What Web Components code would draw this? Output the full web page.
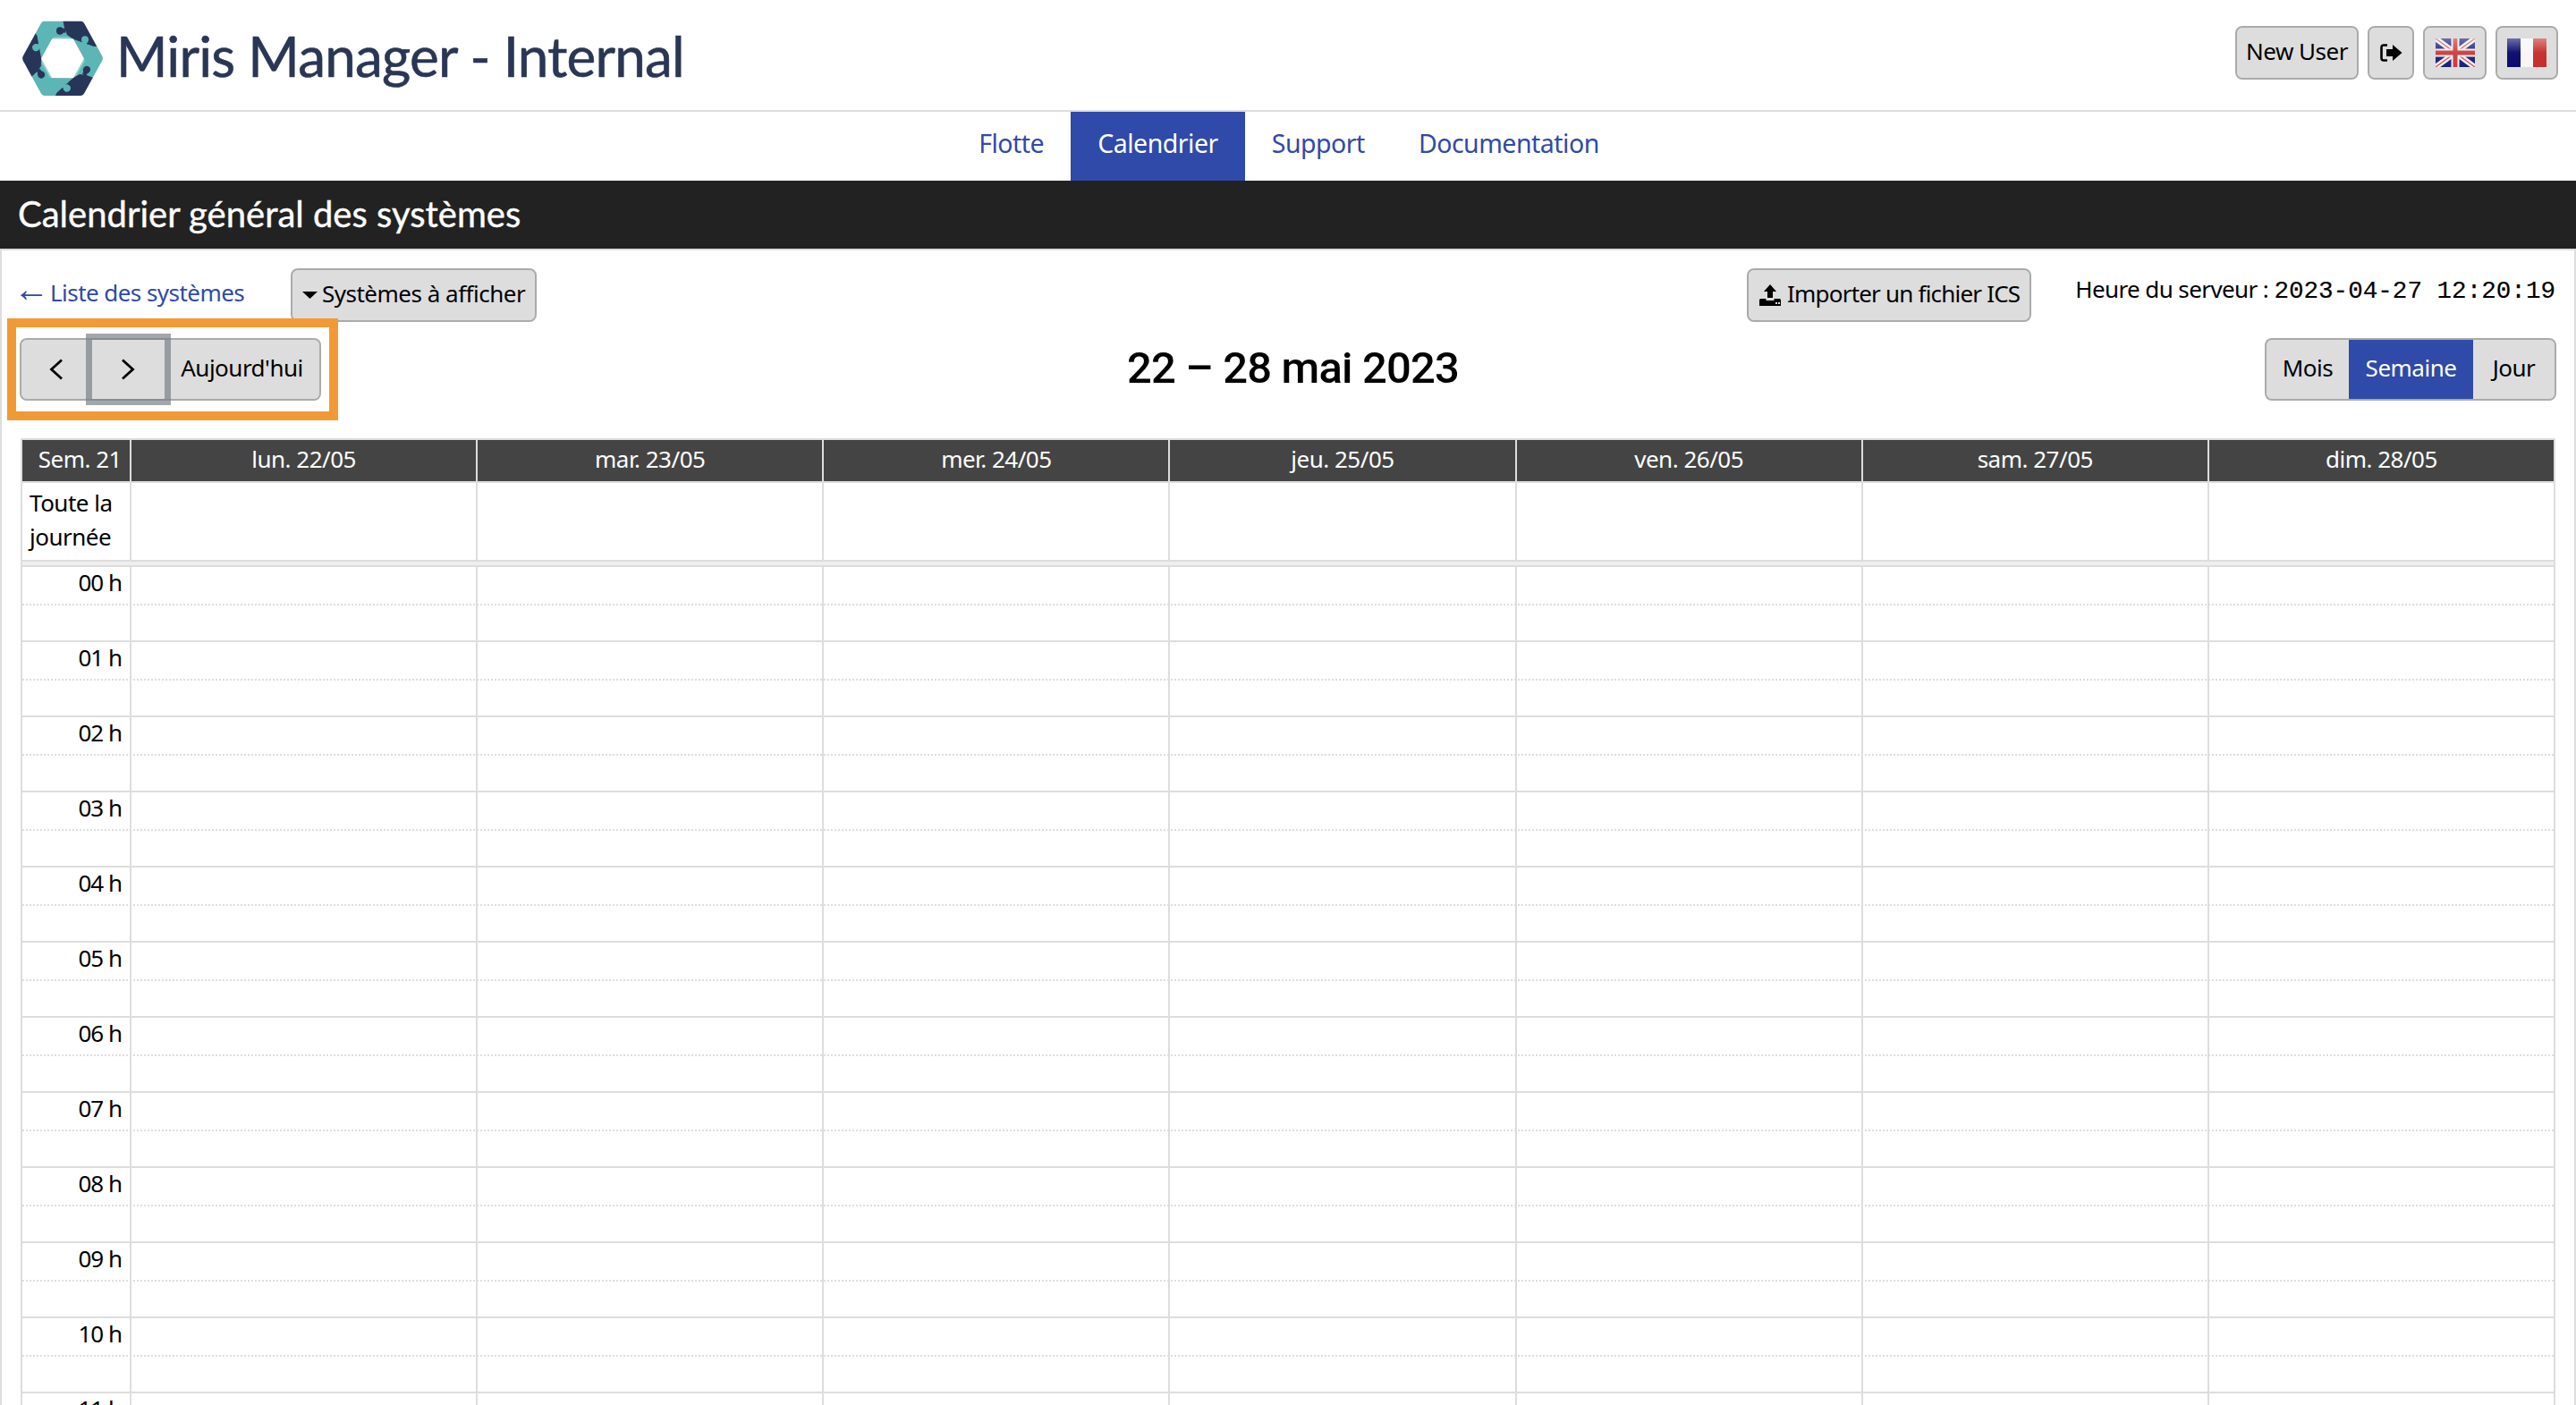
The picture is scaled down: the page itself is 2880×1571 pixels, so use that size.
<!DOCTYPE html>
<html lang="fr">
<head>
<meta charset="utf-8">
<title>Miris Manager - Calendrier</title>
<style>
    html, body { margin: 0; height: 1571px; overflow: hidden; background: #fff; }
    body { font-family: "Noto Sans", sans-serif; font-size: 26px; color: #000; }
</style>
</head>
<body>
<miris-header title-text="Miris Manager - Internal">
    <m-btn slot="actions" h="60" w="138">New User</m-btn>
    <m-btn slot="actions" h="60" icon="logout" w="52"></m-btn>
    <m-btn slot="actions" h="60" icon="uk" w="71"></m-btn>
    <m-btn slot="actions" h="60" icon="fr" w="70"></m-btn>
</miris-header>
<main-nav>
    <nav-tab>Flotte</nav-tab>
    <nav-tab active>Calendrier</nav-tab>
    <nav-tab>Support</nav-tab>
    <nav-tab>Documentation</nav-tab>
</main-nav>
<page-title>Calendrier général des systèmes</page-title>
<calendar-page></calendar-page>

<script>
const ICONS = {
    logout: `<svg width="25" height="20" viewBox="0 0 25 20"><path d="M8 1.5H4Q1.5 1.5 1.5 4V16Q1.5 18.5 4 18.5H8" fill="none" stroke="#000" stroke-width="2.6"/><path d="M7 6H14V1L24.5 10L14 19V14H7Z"/></svg>`,
    upload: `<svg width="26" height="24" viewBox="0 0 26 24" style="margin-right:6px"><path d="M13 0L20 8H16V15H10V8H6Z"/><path d="M1 17.5Q1 16 2.500 16H8.500V18H17.500V16H23.500Q25 16 25 17.500V24H1Z"/><rect x="19" y="20" width="2" height="2" fill="#ddd"/><rect x="22" y="20" width="2" height="2" fill="#ddd"/></svg>`,
    caret: `<svg width="17" height="8" viewBox="0 0 17 8" style="margin-right:5px"><path d="M0 0H17L8.500 8Z"/></svg>`,
    prev: `<svg width="16" height="24" viewBox="0 0 16 24" style="margin-right:2px"><path d="M14 1.500L2.500 12L14 22.500" fill="none" stroke="#000" stroke-width="2.800"/></svg>`,
    next: `<svg width="16" height="24" viewBox="0 0 16 24" style="margin-right:2px"><path d="M2 1.500L13.500 12L2 22.500" fill="none" stroke="#000" stroke-width="2.800"/></svg>`,
    uk: `<svg width="44" height="32" viewBox="0 0 44 32"><defs><filter id="b"><feGaussianBlur stdDeviation=".7"/></filter><linearGradient id="g" x1="0" y1="0" x2="0" y2="1"><stop offset="0" stop-color="#fff" stop-opacity=".35"/><stop offset=".5" stop-color="#fff" stop-opacity=".05"/><stop offset="1" stop-color="#fff" stop-opacity="0"/></linearGradient></defs><g filter="url(#b)"><rect width="44" height="32" fill="#1c2478"/><path d="M0 0L44 32M44 0L0 32" stroke="#eee" stroke-width="6"/><path d="M0 0L44 32M44 0L0 32" stroke="#cf5a60" stroke-width="1.500"/><path d="M22 0V32M0 16H44" stroke="#eee" stroke-width="9"/><path d="M22 0V32M0 16H44" stroke="#cc3a3a" stroke-width="5"/></g><rect width="44" height="32" fill="url(#g)"/></svg>`,
    fr: `<svg width="44" height="32" viewBox="0 0 44 32"><defs><linearGradient id="g2" x1="0" y1="0" x2="0" y2="1"><stop offset="0" stop-color="#fff" stop-opacity=".4"/><stop offset=".5" stop-color="#fff" stop-opacity=".02"/><stop offset="1" stop-color="#fff" stop-opacity="0"/></linearGradient></defs><rect width="15" height="32" fill="#0c0c70"/><rect x="15" width="14" height="32" fill="#f6f6f6"/><rect x="29" width="15" height="32" fill="#c62f2f"/><rect width="44" height="32" fill="url(#g2)"/></svg>`
};

// pinwheel logo: one dark piece repeated three times around the centre
const LOGO_PIECE = `
    <path fill="#273558" d="M2 -135H100L150 -40L105 -38L36 -62L15 -75L6 -98L2 -117Z"/>
    <circle fill="#273558" cx="-9" cy="-88" r="12"/>
    <rect fill="#273558" x="-6" y="-96" width="16" height="14"/>
    <circle fill="#5cb6b6" cx="75" cy="-60" r="12"/>
    <rect fill="#5cb6b6" x="69" y="-56" width="12" height="14" transform="rotate(18 75 -50)"/>
    <path fill="#8fd0cc" d="M-36 -62H36L20 -68H-30Z"/>
    <path fill="#3c4a80" d="M36 -62L72 0L64 -4L34 -56Z"/>`;

class MirisLogo extends HTMLElement {
    constructor() {
        super();
        this.attachShadow({ mode: 'open' });
    }
    connectedCallback() {
        const hex = r => [0, 60, 120, 180, 240, 300].map(a => {
            const t = a * Math.PI / 180;
            return (r * Math.cos(t)).toFixed(1) + ',' + (r * Math.sin(t)).toFixed(1);
        }).join(' ');
        this.shadowRoot.innerHTML = `
            <style>:host { display: block; width: 130px; height: 120px; flex: none; } svg { display: block; }</style>
            <svg width="130" height="120" viewBox="0 0 390 360">
                <defs><mask id="ring" maskUnits="userSpaceOnUse" x="-210" y="-190" width="420" height="380">
                    <polygon points="${hex(122)}" fill="#fff" stroke="#fff" stroke-width="26" stroke-linejoin="round"/>
                    <polygon points="${hex(72)}" fill="#000"/>
                </mask></defs>
                <g transform="translate(210 190) scale(1 1.05)">
                    <g mask="url(#ring)">
                        <rect x="-210" y="-190" width="420" height="380" fill="#5cb6b6"/>
                        <g>${LOGO_PIECE}</g>
                        <g transform="rotate(120)">${LOGO_PIECE}</g>
                        <g transform="rotate(240)">${LOGO_PIECE}</g>
                    </g>
                </g>
            </svg>`;
    }
}
customElements.define('miris-logo', MirisLogo);

class MirisHeader extends HTMLElement {
    constructor() {
        super();
        this.attachShadow({ mode: 'open' });
    }
    connectedCallback() {
        this.shadowRoot.innerHTML = `
            <style>
                :host { display: flex; align-items: center; box-sizing: border-box; height: 125px; border-bottom: 2px solid #ddd; background: #fff; }
                h1 { margin: 0; font: 400 62px/1 Lato, sans-serif; color: #2a3655; letter-spacing: -.8px; -webkit-text-stroke: .6px #2a3655; }
                .actions { margin-left: auto; margin-right: 20px; margin-top: -6px; display: flex; align-items: center; gap: 10px; }
            </style>
            <miris-logo></miris-logo>
            <h1>${this.getAttribute('title-text')}</h1>
            <div class="actions"><slot name="actions"></slot></div>`;
    }
}
customElements.define('miris-header', MirisHeader);

class MainNav extends HTMLElement {
    constructor() {
        super();
        this.attachShadow({ mode: 'open' });
        this.shadowRoot.innerHTML = `
            <style>:host { display: flex; justify-content: center; height: 77px; padding-left: 2px; background: #fff; }</style>
            <slot></slot>`;
    }
}
customElements.define('main-nav', MainNav);

class NavTab extends HTMLElement {
    constructor() {
        super();
        this.attachShadow({ mode: 'open' });
        this.shadowRoot.innerHTML = `
            <style>
                :host { display: flex; align-items: center; padding: 0 30px 7px; color: #2f4aa8; font-size: 28.500px; letter-spacing: -.5px; }
                :host([active]) { background: #2f4aa8; color: #fff; }
            </style>
            <slot></slot>`;
    }
}
customElements.define('nav-tab', NavTab);

class PageTitle extends HTMLElement {
    constructor() {
        super();
        this.attachShadow({ mode: 'open' });
        this.shadowRoot.innerHTML = `
            <style>
                :host { display: flex; align-items: center; box-sizing: border-box; height: 78px; padding: 0 20px 2px; background: #222; border-bottom: 2px solid #ddd; color: #fff; font: 400 40px/1 Lato, sans-serif; -webkit-text-stroke: .4px #fff; }
            </style>
            <slot></slot>`;
    }
}
customElements.define('page-title', PageTitle);

class MBtn extends HTMLElement {
    constructor() {
        super();
        this.attachShadow({ mode: 'open' });
    }
    connectedCallback() {
        const icon = this.getAttribute('icon');
        const h = this.getAttribute('h') || 60;
        const w = this.getAttribute('w');
        this.shadowRoot.innerHTML = `
            <style>
                :host { display: inline-flex; align-items: center; justify-content: center; box-sizing: border-box; height: ${h}px; ${w ? `width: ${w}px;` : 'padding: 0 11px;'} background: #ddd; background-clip: padding-box; border: 2px solid #aaa; border-radius: 8px; color: #000; font-size: 26px; letter-spacing: -.5px; white-space: nowrap; }
                :host([pos=first]) { border-radius: 8px 0 0 8px; border-right: 0; }
                :host([pos=mid]) { border-radius: 0; border-left: 0; border-right: 0; }
                :host([pos=last]) { border-radius: 0 8px 8px 0; border-left: 0; }
                :host([active]) { background: #2f4aa8; background-clip: padding-box; color: #fff; }
                :host([focused]) { position: relative; z-index: 1; }
                .label { display: block; margin-top: ${h == 70 ? -5 : -3}px; }
                .ring { position: absolute; inset: -7px; border: 7px solid rgba(118, 126, 134, .68); pointer-events: none; }
                svg { display: block; flex: none; }
            </style>
            ${icon ? ICONS[icon] : ''}<span class="label"><slot></slot></span>${this.hasAttribute('focused') ? '<span class="ring"></span>' : ''}`;
    }
}
customElements.define('m-btn', MBtn);

class BtnGroup extends HTMLElement {
    constructor() {
        super();
        this.attachShadow({ mode: 'open' });
        this.shadowRoot.innerHTML = `
            <style>:host { display: inline-flex; flex: none; }</style>
            <slot></slot>`;
    }
}
customElements.define('btn-group', BtnGroup);

class CalGrid extends HTMLElement {
    constructor() {
        super();
        this.attachShadow({ mode: 'open' });
    }
    connectedCallback() {
        const days = ['lun. 22/05', 'mar. 23/05', 'mer. 24/05', 'jeu. 25/05', 'ven. 26/05', 'sam. 27/05', 'dim. 28/05'];
        const empties = days.map(() => '<div class="c"></div>').join('');
        let hours = '';
        for (let i = 0; i < 12; i++) {
            const label = String(i).padStart(2, '0') + ' h';
            hours += `<div class="row hour"><div class="t">${label}</div>${empties}</div>`;
        }
        this.shadowRoot.innerHTML = `
            <style>
                :host { display: block; box-sizing: border-box; border: 2px solid #ddd; border-bottom: 0; font-size: 26px; letter-spacing: -.5px; }
                .row { display: grid; grid-template-columns: 120px repeat(7, 1fr); box-sizing: border-box; }
                .c, .t, .h { border-left: 2px solid #ddd; box-sizing: border-box; }
                .row > :first-child { border-left: 0; }
                .head { height: 48px; background: #444; color: #fff; line-height: 42px; text-align: center; border-bottom: 2px solid #ddd; }
                .head .h:first-child { text-align: right; padding-right: 9px; }
                .allday { height: 88px; border-bottom: 2px solid #ddd; }
                .allday .t { padding: 3px 0 0 8px; line-height: 38px; }
                .sep { box-sizing: border-box; height: 6px; background: #eee; border-bottom: 2px solid #ddd; }
                .hour { height: 84px; border-bottom: 2px solid #ddd; position: relative; }
                .hour::after { content: ""; position: absolute; left: 0; right: 0; top: 41px; border-top: 2px dotted #ddd; }
                .hour .t { text-align: right; padding-right: 9px; line-height: 35px; letter-spacing: -1px; }
            </style>
            <div class="row head"><div class="h">Sem. 21</div>${days.map(d => `<div class="h">${d}</div>`).join('')}</div>
            <div class="row allday"><div class="t">Toute la journée</div>${empties}</div>
            <div class="sep"></div>
            ${hours}`;
    }
}
customElements.define('cal-grid', CalGrid);

class CalendarPage extends HTMLElement {
    constructor() {
        super();
        this.attachShadow({ mode: 'open' });
    }
    connectedCallback() {
        this.shadowRoot.innerHTML = `
            <style>
                :host { display: block; position: relative; box-sizing: border-box; height: 1291px; overflow: hidden; padding: 20px 20px 0 20px; border-left: 2px solid #ddd; border-right: 2px solid #ddd; }
                .top { display: flex; align-items: center; height: 59px; }
                .back { width: 303px; color: #2f4aa8; font-size: 26px; letter-spacing: -.55px; margin-top: -6px; display: flex; align-items: baseline; gap: 1px; }
                .back i { font: normal 40px/26px "Liberation Sans", sans-serif; letter-spacing: 0; margin-left: -7px; }
                .import { margin-left: auto; margin-right: 49px; letter-spacing: -.8px; }
                .time { font-size: 26px; letter-spacing: -.6px; margin-top: -14px; margin-right: 1px; white-space: nowrap; }
                .time code { font: 27.600px "Liberation Mono", monospace; letter-spacing: 0; -webkit-text-stroke: .15px #000; }
                .bar { display: flex; align-items: center; justify-content: space-between; margin-top: 19px; height: 70px; }
                h2 { margin: 0; font: 500 49px/1 Roboto, sans-serif; letter-spacing: -.85px; position: relative; top: -2px; }
                cal-grid { margin: 42px 1px 0 1px; }
                .note { position: absolute; left: 6px; top: 76px; width: 370px; height: 114px; box-sizing: border-box; border: 10px solid #f19a35; pointer-events: none; }
            </style>
            <div class="top">
                <span class="back"><i>←</i><span>Liste des systèmes</span></span>
                <m-btn icon="caret">Systèmes à afficher</m-btn>
                <m-btn class="import" icon="upload">Importer un fichier ICS</m-btn>
                <span class="time">Heure du serveur : <code>2023-04-27 12:20:19</code></span>
            </div>
            <div class="bar">
                <btn-group>
                    <m-btn h="70" w="81" pos="first" icon="prev"></m-btn>
                    <m-btn h="70" w="81" pos="mid" icon="next" focused></m-btn>
                    <m-btn h="70" w="175" pos="last">Aujourd'hui</m-btn>
                </btn-group>
                <h2>22 – 28 mai 2023</h2>
                <btn-group>
                    <m-btn h="70" w="94" pos="first">Mois</m-btn>
                    <m-btn h="70" w="139" pos="mid" active>Semaine</m-btn>
                    <m-btn h="70" w="93" pos="last">Jour</m-btn>
                </btn-group>
            </div>
            <cal-grid></cal-grid>
            <div class="note"></div>`;
    }
}
customElements.define('calendar-page', CalendarPage);
</script>
</body>
</html>
